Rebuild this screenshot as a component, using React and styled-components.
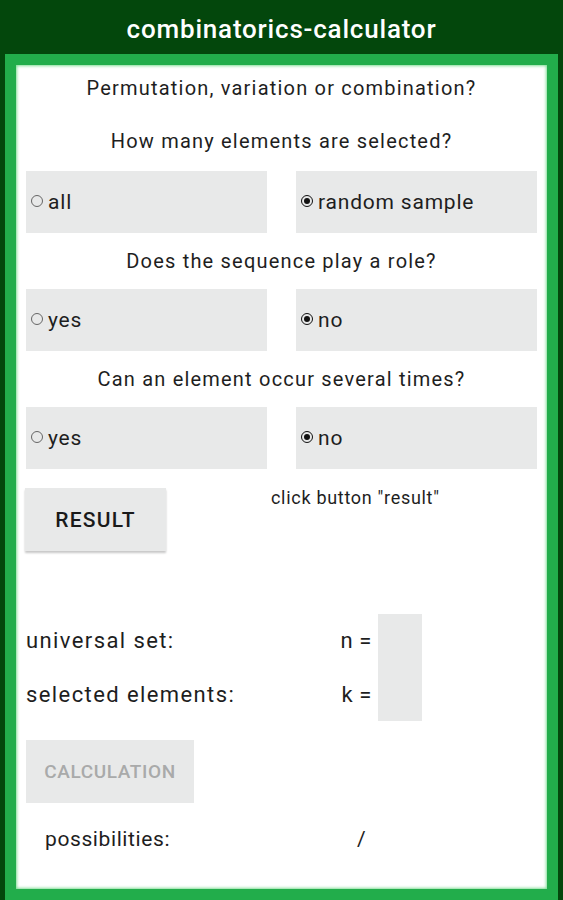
import React, { useState } from 'react';
import styled, { createGlobalStyle } from 'styled-components';

const GlobalStyle = createGlobalStyle`
	html, body {
		margin: 0;
		padding: 0;
		background: #03470c;
		font-family: Roboto, "Noto Sans", "Liberation Sans", sans-serif;
	}
`;

const Page = styled.div`
	height: 900px;
	display: flex;
	flex-direction: column;
	overflow: hidden;
`;

const Header = styled.div`
	height: 54px;
	flex: none;
	display: flex;
	align-items: center;
	justify-content: center;
	color: #fff;
	font-size: 26px;
	font-weight: 500;
	letter-spacing: 0.8px;
	padding-top: 3px;
	box-sizing: border-box;
`;

const Frame = styled.div`
	flex: 1;
	margin: 0 5px;
	border: 11px solid #22ad4b;
	background: #fff;
	box-shadow: inset 0 0 3px 1px #7fdc95;
	padding: 0 10px;
	color: #1e1e1e;
`;

const Title = styled.div`
	height: ${(p) => p.h || 56}px;
	display: flex;
	align-items: center;
	justify-content: center;
	font-size: 20px;
	letter-spacing: 1.2px;
`;

const OptionRow = styled.div`
	display: grid;
	grid-template-columns: 1fr 1fr;
	column-gap: 29px;
`;

const Option = styled.label`
	height: 62px;
	background: #e8e9e9;
	display: flex;
	align-items: center;
	padding-left: 5px;
	gap: 5px;
	font-size: 21px;
	letter-spacing: 0.8px;
	cursor: pointer;
`;

const Radio = styled.span`
	width: 12px;
	height: 12px;
	box-sizing: border-box;
	border-radius: 50%;
	border: 1px solid ${(p) => (p.checked ? '#111' : '#666')};
	display: flex;
	align-items: center;
	justify-content: center;
	margin-top: -2px;

	&::after {
		content: '';
		width: 6px;
		height: 6px;
		border-radius: 50%;
		background: #111;
		display: ${(p) => (p.checked ? 'block' : 'none')};
	}
`;

const ResultRow = styled.div`
	display: flex;
	align-items: flex-start;
	margin-top: 19px;
`;

const Button = styled.button`
	height: 63px;
	width: ${(p) => p.w}px;
	border: none;
	background: #e8e9e9;
	font-family: inherit;
	font-size: ${(p) => (p.disabled ? 19 : 21)}px;
	letter-spacing: ${(p) => (p.disabled ? 0.6 : 1.2)}px;
	font-weight: 500;
	color: ${(p) => (p.disabled ? '#a9aaaa' : '#1a1a1a')};
	box-shadow: ${(p) => (p.disabled ? 'none' : '0 2px 2px rgba(0, 0, 0, 0.22)')};
	margin-left: ${(p) => p.ml || 0}px;
	padding: 0;
	cursor: pointer;
`;

const Hint = styled.div`
	font-size: 18px;
	letter-spacing: 0.7px;
	margin-left: 105px;
	line-height: 20px;
`;

const InputGrid = styled.div`
	display: grid;
	grid-template-columns: 312px 40px 44px;
	grid-template-rows: 53.5px 53.5px;
	align-items: center;
	margin-top: 63px;
	font-size: 22px;
	letter-spacing: 1.4px;
`;

const Eq = styled.div`
	text-align: right;
	padding-right: 6px;
	letter-spacing: 0.6px;
`;

const NumberBox = styled.div`
	grid-column: 3;
	grid-row: 1 / span 2;
	align-self: stretch;
	background: #e8e9e9;
`;

const CalcWrap = styled.div`
	margin-top: 19px;
`;

const OutputRow = styled.div`
	display: grid;
	grid-template-columns: 312px auto;
	padding-left: 19px;
	margin-top: 21px;
	height: 30px;
	align-items: center;
	font-size: 21px;
	letter-spacing: 0.6px;
`;

const questions = [
	{ key: 'selected', text: 'How many elements are selected?', options: ['all', 'random sample'] },
	{ key: 'order', text: 'Does the sequence play a role?', options: ['yes', 'no'] },
	{ key: 'repeat', text: 'Can an element occur several times?', options: ['yes', 'no'] },
];

export default function App() {
	const [answers, setAnswers] = useState({ selected: 1, order: 1, repeat: 1 });

	return (
		<Page>
			<GlobalStyle />
			<Header>combinatorics-calculator</Header>
			<Frame>
				<Title h={46}>Permutation, variation or combination?</Title>
				{questions.map((q, i) => (
					<div key={q.key}>
						<Title h={i === 0 ? 60 : 56}>{q.text}</Title>
						<OptionRow>
							{q.options.map((opt, j) => (
								<Option key={opt} onClick={() => setAnswers({ ...answers, [q.key]: j })}>
									<Radio checked={answers[q.key] === j} />
									{opt}
								</Option>
							))}
						</OptionRow>
					</div>
				))}

				<ResultRow>
					<Button w={141} ml={-1}>RESULT</Button>
					<Hint>click button "result"</Hint>
				</ResultRow>

				<InputGrid>
					<div>universal set:</div>
					<Eq>n =</Eq>
					<NumberBox />
					<div>selected elements:</div>
					<Eq>k =</Eq>
				</InputGrid>

				<CalcWrap>
					<Button w={168} disabled>CALCULATION</Button>
				</CalcWrap>

				<OutputRow>
					<div>possibilities:</div>
					<div>/</div>
				</OutputRow>
			</Frame>
		</Page>
	);
}
